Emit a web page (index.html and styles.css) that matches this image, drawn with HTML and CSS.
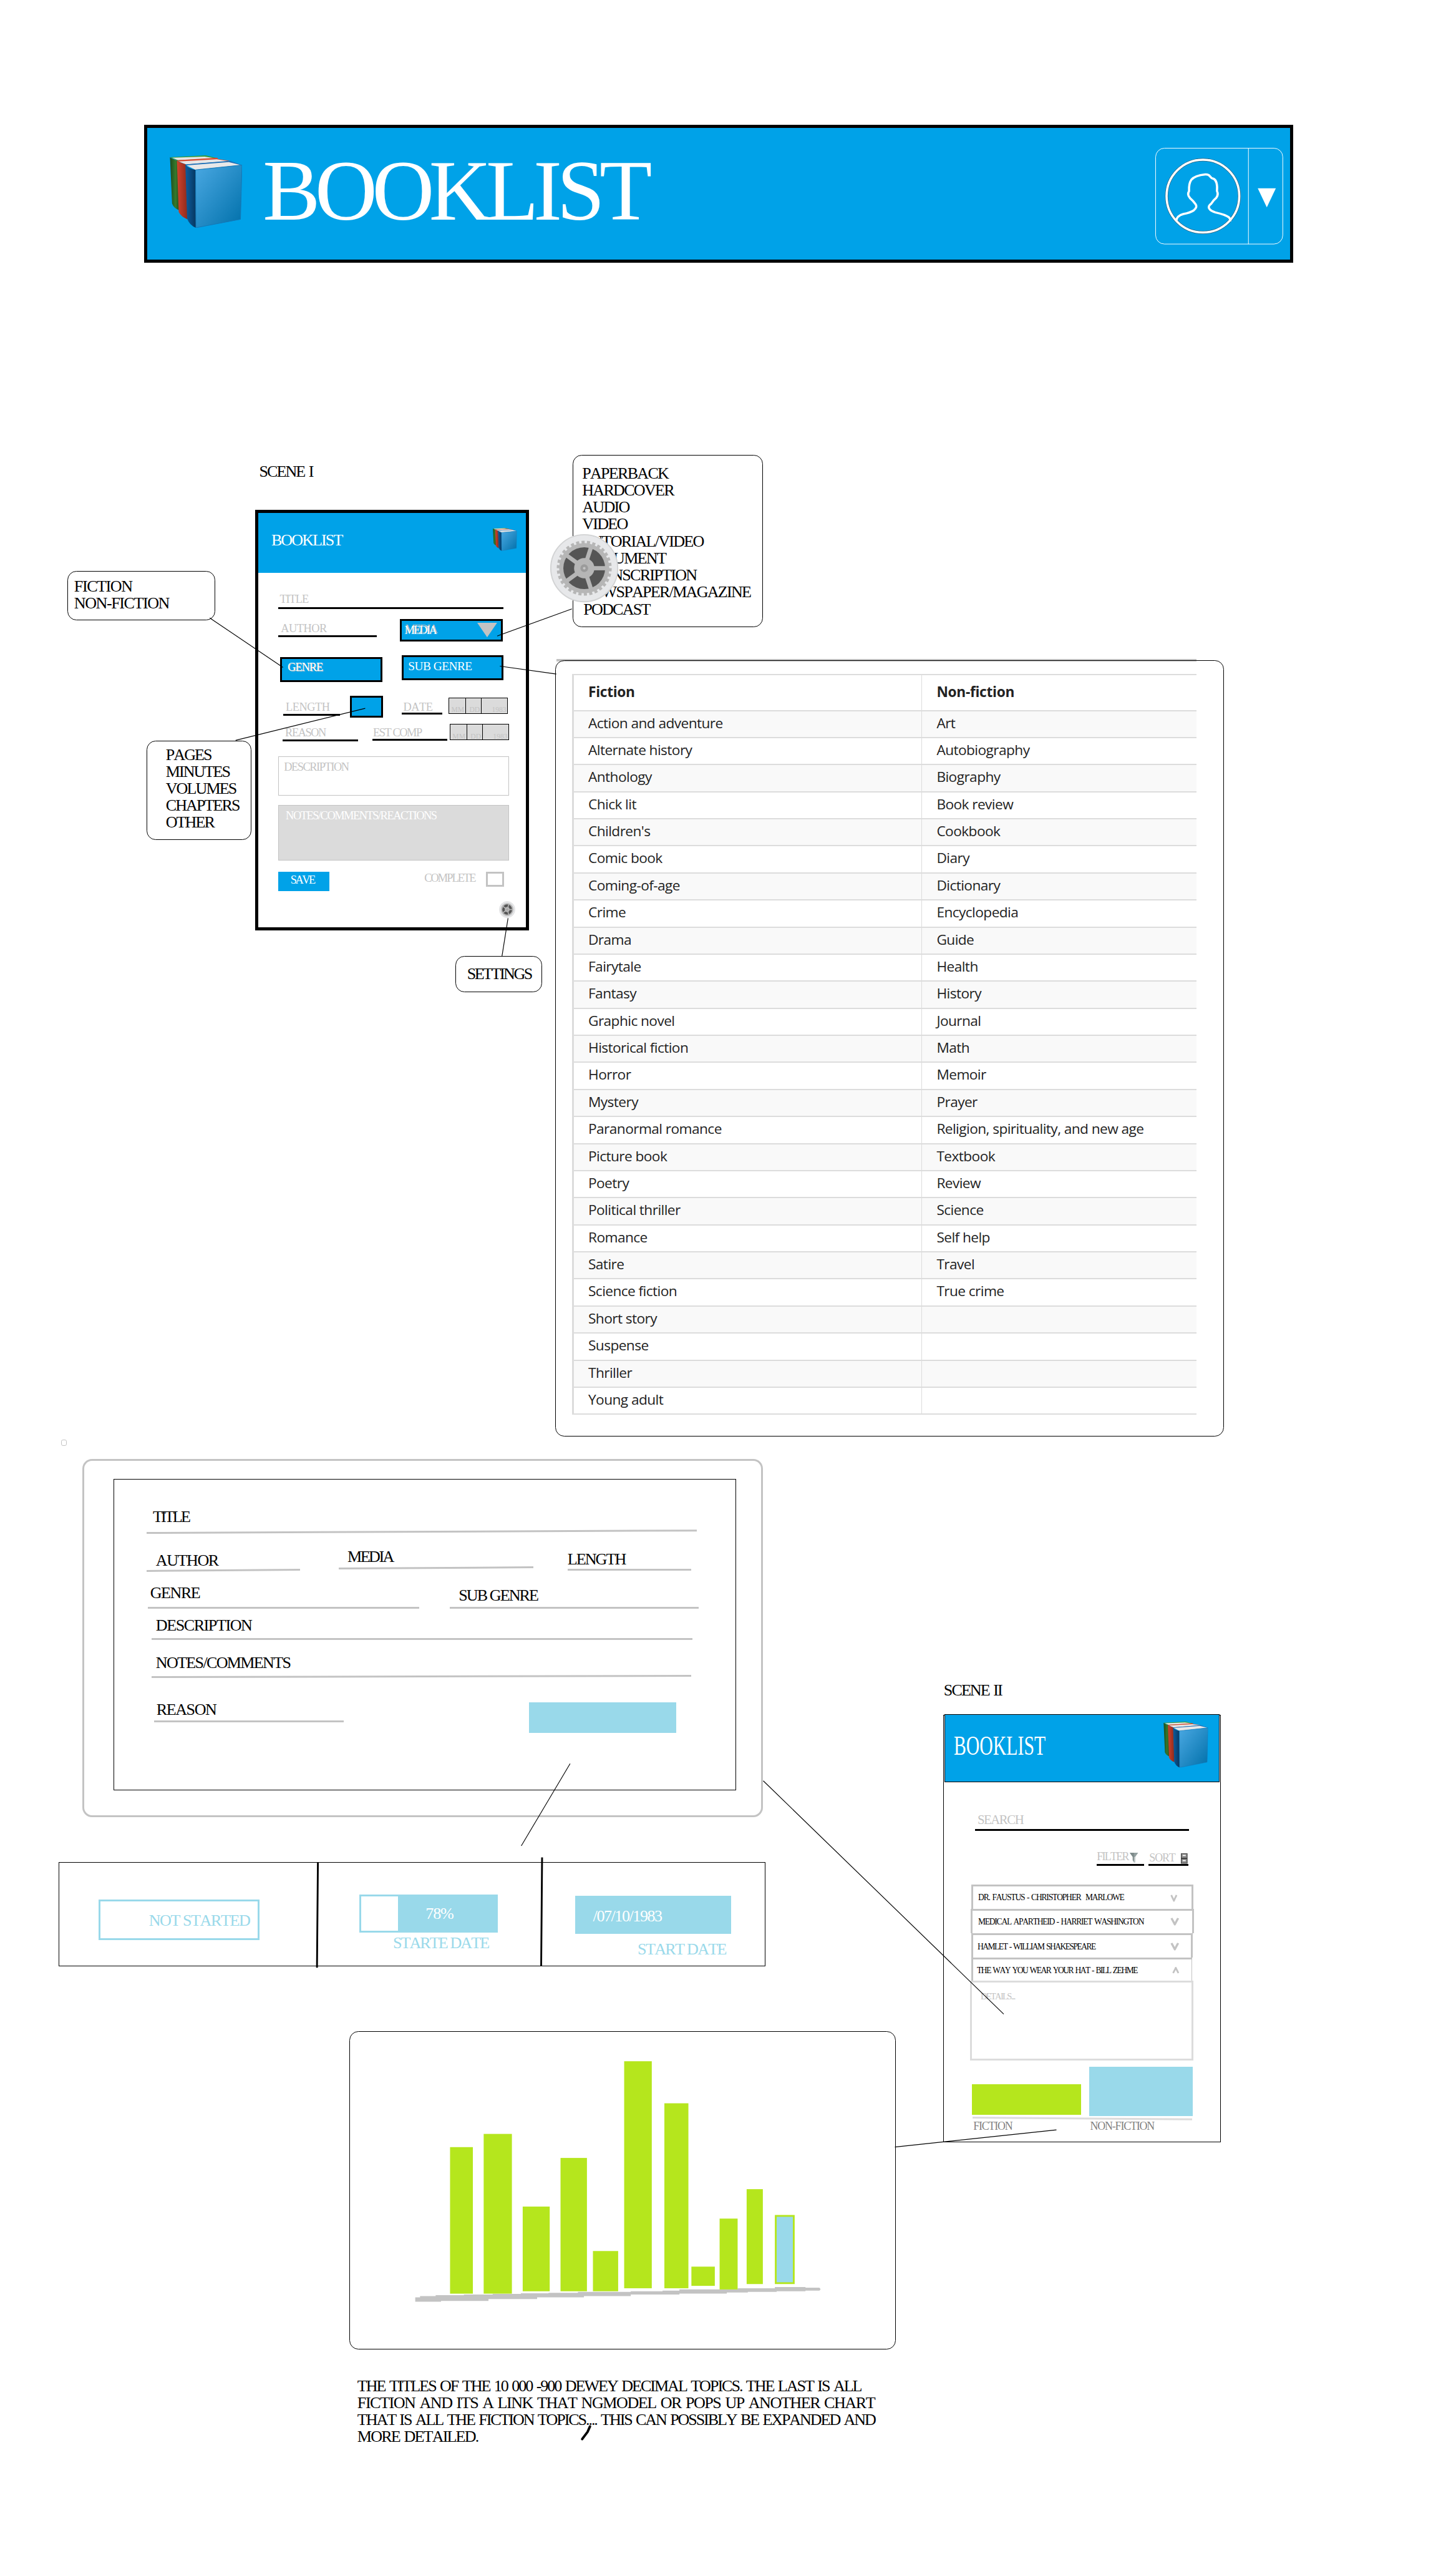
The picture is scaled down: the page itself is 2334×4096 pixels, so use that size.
FILE: index.html
```html
<!DOCTYPE html>
<html lang="en">
<head>
<meta charset="utf-8">
<title>Booklist wireframe</title>
<link rel="stylesheet" href="styles.css">
</head>
<body>
<svg class="defs" width="0" height="0" aria-hidden="true">
  <defs>
    <linearGradient id="cover" x1="0" y1="0" x2="1" y2="1"><stop offset="0" stop-color="#4aa8e2"/><stop offset="1" stop-color="#0070aa"/></linearGradient>
    <linearGradient id="spineBlue" x1="0" y1="0" x2="1" y2="0"><stop offset="0" stop-color="#0d5c9c"/><stop offset=".5" stop-color="#0a4a80"/><stop offset="1" stop-color="#06375f"/></linearGradient>
    <linearGradient id="spineRed" x1="0" y1="0" x2="1" y2="0"><stop offset="0" stop-color="#d2432c"/><stop offset="1" stop-color="#8e2a1c"/></linearGradient>
    <linearGradient id="spineGreen" x1="0" y1="0" x2="1" y2="0"><stop offset="0" stop-color="#1c4a1c"/><stop offset=".6" stop-color="#357a2c"/><stop offset="1" stop-color="#1f4c1c"/></linearGradient>
    <symbol id="books" viewBox="0 0 120 120" preserveAspectRatio="none">
      <path d="M1 3L60 0L80 5L14 9Z" fill="#3a9a34"/>
      <path d="M4 4L58 2L76 5L14 8Z" fill="#e6e6e6"/>
      <path d="M.5 3Q6 7 14 9L16 91Q7 88 4 80Z" fill="url(#spineGreen)"/>
      <path d="M12 8L79 4L80 6L100 9L27 15Z" fill="#d9482f"/>
      <path d="M15 10L78 6.500L98 9.500L27 15Z" fill="#e6e6e6"/>
      <path d="M12 8.500Q20 13 27 15L29.500 106Q19 102 15 94Z" fill="url(#spineRed)"/>
      <path d="M26 15L100 9L120 16L43 24Z" fill="#1c6fb8"/>
      <path d="M28 16.500L98 11L118 16L43 24Z" fill="#e8e8e8"/>
      <path d="M26 15Q31 22 43 24L43.500 120Q33 116 29 105Z" fill="url(#spineBlue)"/>
      <path d="M43 24L120 16L117.500 106L43.500 120Z" fill="url(#cover)" stroke="#1577b5" stroke-width="1"/>
    </symbol>
    <symbol id="gear" viewBox="-58 -58 116 116" preserveAspectRatio="none">
      <circle r="56" fill="#e7e8ea" stroke="#d2d3d4" stroke-width="2"/>
      <circle r="43.500" fill="none" stroke="#b6b6b6" stroke-width="5" pathLength="60" stroke-dasharray="1.150 .850"/>
      <circle r="42" fill="#b6b6b6"/>
      <circle r="35" fill="#555"/>
      <g fill="#b6b6b6">
        <rect y="-3.500" width="38" height="7"/>
        <rect y="-3.500" width="38" height="7" transform="rotate(72)"/>
        <rect y="-3.500" width="38" height="7" transform="rotate(144)"/>
        <rect y="-3.500" width="38" height="7" transform="rotate(216)"/>
        <rect y="-3.500" width="38" height="7" transform="rotate(288)"/>
        <circle r="17"/>
      </g>
      <circle r="6.500" fill="#9b9b9b"/>
      <circle r="2.200" fill="#c4c4c4"/>
    </symbol>
    <symbol id="chevron" viewBox="0 0 15 14" preserveAspectRatio="none">
      <path d="M2 1L7.500 12L13 1" fill="none" stroke="#c3c3c3" stroke-width="3.600"/>
    </symbol>
  </defs>
</svg>

<main class="board">
  <header class="site-bar">
    <svg class="site-logo"><use href="#books"/></svg>
    <h1 class="site-name">BOOKLIST</h1>
    <div class="account">
      <svg viewBox="171 165 636 480">
        <rect x="172.500" y="166.500" width="633" height="477" rx="44" fill="none" stroke="#fff" stroke-width="3"/>
        <path d="M634.500 166V644" stroke="#fff" stroke-width="3"/>
        <circle cx="408" cy="405" r="181" fill="none" stroke="#2c5f7a" stroke-width="15"/>
        <g fill="none" stroke="#fff" stroke-width="11" stroke-linejoin="round">
          <circle cx="408" cy="405" r="181"/>
          <path d="M275 530Q276 503 310 494Q345 487 362 476Q382 460 372 446Q360 428 344 415Q328 397 339 380Q337 342 350 324Q368 302 420 297Q436 296 443 306Q450 318 462 319Q482 330 478 380Q487 397 474 414Q460 425 450 442Q431 455 440 468Q448 480 470 486Q520 497 538 511Q545 518 544 530"/>
        </g>
        <path d="M681 366H771L726 461Z" fill="#fff"/>
      </svg>
    </div>
  </header>

  <h2 class="scene scene-one">SCENE I</h2>

  <section class="phone phone-one">
    <div class="app-bar">
      <span class="text tr-20">BOOKLIST</span>
      <svg class="app-logo"><use href="#books"/></svg>
    </div>
    <div class="form">
      <div class="field f-title small tr-10">TITLE</div>
      <div class="row r-author">
        <div class="field f-author small tr-5">AUTHOR</div>
        <div class="select s-media small tr-20"><span class="media-name">MEDIA</span><svg class="drop" viewBox="0 0 33 24"><path d="M0 0H33L16.500 24Z" fill="#c3c3c3"/></svg></div>
      </div>
      <div class="row r-genre">
        <div class="select s-genre small tr-10">GENRE</div>
        <div class="select s-sub small tr-5">SUB GENRE</div>
      </div>
      <div class="row r-length">
        <div class="field f-length small tr-5">LENGTH</div>
        <div class="select s-unit"></div>
        <div class="field f-date small tr-5">DATE</div>
        <div class="date d-one"><span>MM</span><span>DD</span><span>1983</span></div>
      </div>
      <div class="row r-reason">
        <div class="field f-reason small tr-15">REASON</div>
        <div class="field f-est small tr-15">EST COMP</div>
        <div class="date d-two"><span>MM</span><span>DD</span><span>1983</span></div>
      </div>
      <div class="area a-desc small tr-15">DESCRIPTION</div>
      <div class="area a-notes small tr-15">NOTES/COMMENTS/REACTIONS</div>
      <div class="row r-save">
        <div class="save small tr-25">SAVE</div>
        <div class="complete small tr-20">COMPLETE</div>
        <div class="check"></div>
      </div>
      <svg class="gear-small"><use href="#gear"/></svg>
    </div>
  </section>

  <div class="note n-genre"><p>FICTION</p><p>NON-FICTION</p></div>
  <div class="note n-unit tr-20"><p>PAGES</p><p>MINUTES</p><p>VOLUMES</p><p>CHAPTERS</p><p>OTHER</p></div>
  <div class="note n-settings tr-25"><p>SETTINGS</p></div>
  <div class="note n-media"><p>PAPERBACK</p><p>HARDCOVER</p><p>AUDIO</p><p>VIDEO</p><p>TUTORIAL/VIDEO</p><p>DOCUMENT</p><p>TRANSCRIPTION</p><p>NEWSPAPER/MAGAZINE</p><p class="podcast">PODCAST</p></div>
  <svg class="gear-large"><use href="#gear"/></svg>

  <div class="shade"></div>
  <section class="note genres">
    <div class="genre-table">
      <b>Fiction</b><b>Non-fiction</b>
      <span class="alt">Action and adventure</span><span class="alt">Art</span>
      <span>Alternate history</span><span>Autobiography</span>
      <span class="alt">Anthology</span><span class="alt">Biography</span>
      <span>Chick lit</span><span>Book review</span>
      <span class="alt">Children's</span><span class="alt">Cookbook</span>
      <span>Comic book</span><span>Diary</span>
      <span class="alt">Coming-of-age</span><span class="alt">Dictionary</span>
      <span>Crime</span><span>Encyclopedia</span>
      <span class="alt">Drama</span><span class="alt">Guide</span>
      <span>Fairytale</span><span>Health</span>
      <span class="alt">Fantasy</span><span class="alt">History</span>
      <span>Graphic novel</span><span>Journal</span>
      <span class="alt">Historical fiction</span><span class="alt">Math</span>
      <span>Horror</span><span>Memoir</span>
      <span class="alt">Mystery</span><span class="alt">Prayer</span>
      <span>Paranormal romance</span><span>Religion, spirituality, and new age</span>
      <span class="alt">Picture book</span><span class="alt">Textbook</span>
      <span>Poetry</span><span>Review</span>
      <span class="alt">Political thriller</span><span class="alt">Science</span>
      <span>Romance</span><span>Self help</span>
      <span class="alt">Satire</span><span class="alt">Travel</span>
      <span>Science fiction</span><span>True crime</span>
      <span class="alt">Short story</span><span class="alt"></span>
      <span>Suspense</span><span></span>
      <span class="alt">Thriller</span><span class="alt"></span>
      <span>Young adult</span><span></span>
    </div>
  </section>

  <div class="speck"></div>

  <section class="detail">
    <div class="sheet">
      <div class="line l-title tr-30">TITLE</div>
      <div class="row r-who">
        <div class="line l-author tr-15">AUTHOR</div>
        <div class="line l-media tr-25">MEDIA</div>
        <div class="line l-length tr-20">LENGTH</div>
      </div>
      <div class="row r-kind">
        <div class="line l-genre tr-15">GENRE</div>
        <div class="line l-sub tr-20">SUB GENRE</div>
      </div>
      <div class="line l-desc tr-15">DESCRIPTION</div>
      <div class="line l-notes tr-17">NOTES/COMMENTS</div>
      <div class="row r-why">
        <div class="line l-reason tr-15">REASON</div>
        <div class="status-chip"></div>
      </div>
    </div>
  </section>

  <section class="states">
    <div class="state st-none"><div class="bar b-none text tr-15">NOT STARTED</div></div>
    <div class="state st-part"><div class="bar b-part text tr-10">78%</div><p class="text tr-20">STARTE DATE</p></div>
    <div class="state st-done"><div class="bar b-done text tr-15">/07/10/1983</div><p class="text tr-17">START DATE</p></div>
  </section>

  <h2 class="scene scene-two tr-20">SCENE II</h2>

  <section class="phone-two">
    <div class="list-bar">
      <span class="list-name">BOOKLIST</span>
      <svg class="list-logo"><use href="#books"/></svg>
    </div>
    <div class="search tr-15">SEARCH</div>
    <div class="tools">
      <div class="tool t-filter"><span class="tr-17">FILTER</span><svg class="funnel" viewBox="0 0 14 16"><path d="M0 0H14L9 7V16H7L5 13V7Z" fill="#93a0a0"/><path d="M0 0H7V14L5 12V7Z" fill="#7d8a8a"/><path d="M7 7H9V16H7Z" fill="#c5cccc"/></svg></div>
      <div class="tool t-sort"><span class="tr-10">SORT</span><svg class="cabinet" viewBox="0 0 11 17"><rect width="11" height="17" fill="#3a3a3a"/><rect x="1" y="1" width="9" height="6.500" fill="#8a8a8a"/><rect x="1" y="9.500" width="9" height="6.500" fill="#8a8a8a"/><path d="M3 3.500H8M3 12H8" stroke="#fff" stroke-width="2"/></svg></div>
    </div>
    <div class="book bk-1"><span>DR. FAUSTUS - CHRISTOPHER&nbsp; MARLOWE</span><svg><use href="#chevron"/></svg></div>
    <div class="book bk-2"><span>MEDICAL APARTHEID - HARRIET WASHINGTON</span><svg><use href="#chevron"/></svg></div>
    <div class="book bk-3"><span>HAMLET - WILLIAM SHAKESPEARE</span><svg><use href="#chevron"/></svg></div>
    <div class="book bk-4"><span>THE WAY YOU WEAR YOUR HAT - BILL ZEHME</span><svg><use href="#chevron"/></svg></div>
    <div class="details">DETAILS...</div>
    <div class="totals"><div class="total-fiction"></div><div class="total-non"></div></div>
    <div class="totals-rule"></div>
    <div class="totals-names"><span>FICTION</span><span>NON-FICTION</span></div>
  </section>

  <section class="note chart">
    <svg viewBox="580 3369 906 528" width="904" height="526">
      <path d="M688 3811H696V3809H722V3807.500H769V3806.500H817V3805.500H864V3804.500H910V3803.500H959V3802H1047V3801H1100V3800H1128V3798H1225V3796H1287V3794H1338V3795H1361Q1365 3797.500 1361 3800H1338V3801H1290V3802H1242V3803H1207V3805H1128V3806.500H1047V3809H969V3811H891V3814H810V3817H731V3818.500H688Z" fill="#c3c3c3"/>
      <g fill="#b5e61d">
        <rect x="746" y="3561" width="38" height="244"/>
        <rect x="802" y="3539" width="47" height="266"/>
        <rect x="867" y="3660" width="45" height="141"/>
        <rect x="930" y="3579" width="44" height="222"/>
        <rect x="984" y="3734" width="42" height="67"/>
        <rect x="1036" y="3418" width="46" height="378"/>
        <rect x="1103" y="3488" width="40" height="308"/>
        <rect x="1148" y="3760" width="39" height="32"/>
        <rect x="1195" y="3680" width="30" height="118"/>
        <rect x="1240" y="3631" width="27" height="158"/>
        <rect x="1287" y="3674" width="33" height="115"/>
      </g>
      <rect x="1290" y="3677" width="27" height="109" fill="#99d9ea"/>
    </svg>
  </section>

  <div class="caption">
    <p class="cap-1">THE TITLES OF THE 10 000 -900 DEWEY DECIMAL TOPICS. THE LAST IS ALL</p>
    <p class="cap-2">FICTION AND ITS A LINK THAT NGMODEL OR POPS UP ANOTHER CHART</p>
    <p class="cap-3">THAT IS ALL THE FICTION TOPICS.... THIS CAN POSSIBLY BE EXPANDED AND</p>
    <p class="cap-4">MORE DETAILED.</p>
  </div>

  <svg class="connectors" viewBox="0 0 2416 4240">
    <g fill="none" stroke="#000" stroke-width="1.200">
      <path d="M348 1025L469.500 1107"/>
      <path d="M391 1228L606 1175"/>
      <path d="M843 1523L833 1586"/>
      <path d="M825 1055L949 1010"/>
      <path d="M829.500 1105L923 1118"/>
      <path d="M946 2925.500L865 3062"/>
      <path d="M1266.500 2954L1665.500 3341"/>
      <path d="M1485 3561.500L1753 3533"/>
    </g>
    <path d="M527.500 3089L526 3264M899.500 3081L898 3261" stroke="#000" stroke-width="3"/>
    <path d="M979 4025L975 4034L966 4046" fill="none" stroke="#000" stroke-width="4" stroke-linecap="round"/>
  </svg>
</main>
</body>
</html>
```

FILE: styles.css
```css
* { box-sizing: border-box; }
html, body { margin: 0; background: #fff; overflow: hidden; }
h1, h2, p { margin: 0; font-weight: 400; }
svg { display: block; flex: none; overflow: visible; }
.defs { position: absolute; }

/* The drawing board: frames are pinned on it, their contents flow. */
.board {
  position: relative;
  width: 2416px;
  height: 4240px;
  zoom: 0.96606;
  overflow: hidden;
  background: #fff;
  color: #000;
  font: 27px/28px "Liberation Serif", "Times New Roman", serif;
  font-kerning: none;
  white-space: nowrap;
}
.board > * { position: absolute; }

.tr-5 { letter-spacing: -0.5px; }
.tr-10 { letter-spacing: -1.1px; }
.tr-15 { letter-spacing: -1.5px; }
.tr-17 { letter-spacing: -1.75px; }
.tr-20 { letter-spacing: -2px; }
.tr-25 { letter-spacing: -2.6px; }
.tr-30 { letter-spacing: -3px; }
.small { font-size: 19px; line-height: 20px; }
.row { display: flex; align-items: flex-start; }
.row > * { flex: none; }

/* Site header */
.site-bar { left: 239px; top: 207px; width: 1907px; height: 229px; border: 5.2px solid #000; background: #00a2e8; display: flex; align-items: flex-start; }
.site-logo { width: 120px; height: 120px; margin: 46px 0 0 37px; }
.site-name { color: #fff; font-size: 143px; line-height: 144px; letter-spacing: -8.7px; margin: 32px 0 0 35px; }
.account { margin: 33px 12px 0 auto; width: 212px; height: 160px; }
.account svg { width: 212px; height: 160px; }

.scene { font-size: 27px; line-height: 28px; }
.scene-one { left: 430px; top: 768px; letter-spacing: -2px; word-spacing: 2px; }
.scene-two { left: 1566px; top: 2790px; word-spacing: 2px; }

/* Entry form */
.phone-one { left: 423px; top: 846px; width: 455px; height: 697px; border: 5.2px solid #000; background: #fff; }
.app-bar { height: 99px; background: #00a2e8; color: #fff; display: flex; align-items: flex-start; justify-content: space-between; padding: 25px 15px 0 22px; }
.app-bar .text { margin-top: 5.5px; }
.app-logo { width: 40px; height: 38px; }
.form { padding-left: 33px; }
.field { border-bottom: 3.2px solid #000; color: #c3c3c3; }
.f-title { margin-top: 34px; width: 374px; height: 26px; padding-left: 3px; }
.r-author { margin-top: 17px; height: 37px; }
.f-author { margin: 5.5px 0 0 1px; width: 163px; height: 24.5px; padding-left: 4px; }
.select { border: 3.2px solid #000; background: #00a2e8; color: #fff; }
.s-media { margin-left: 38px; width: 171px; height: 37px; display: flex; justify-content: space-between; padding: 3px 6px 0 5px; }
.media-name { padding-top: 3px; text-shadow: 1px -2px 0 #c3c3c3; }
.drop { width: 33px; height: 24px; }
.r-genre { margin-top: 23px; height: 44px; }
.s-genre { margin: 3px 0 0 4px; width: 169px; height: 41px; padding: 4px 0 0 9px; text-shadow: 1px 1px 0 #c3c3c3; }
.s-sub { margin-left: 32px; width: 169px; height: 41px; padding: 5px 0 0 8px; font-size: 20px; }
.r-length { margin-top: 23px; height: 36px; }
.f-length { margin: 9px 0 0 9px; width: 94px; height: 24px; padding-left: 4px; }
.s-unit { margin-left: 17px; width: 54px; height: 36px; }
.f-date { margin: 9px 0 0 31px; width: 68px; height: 22px; padding-left: 3px; }
.date { width: 99px; height: 27px; border: 1px solid #000; background: #dbdbdb; color: #c3c3c3; display: grid; grid-template-columns: 27px 26px 1fr; font-size: 12px; line-height: 12px; }
.date span { padding: 14px 2px 0 0; text-align: right; }
.date span + span { border-left: 1px solid #000; }
.d-one { margin: 3px 0 0 10px; }
.r-reason { margin-top: 11px; height: 29px; }
.f-reason { margin: 5px 0 0 8px; width: 125px; height: 24px; padding-left: 4px; }
.f-est { margin: 4.5px 0 0 24px; width: 124px; height: 23.5px; padding-left: 1px; }
.d-two { margin-left: 4px; }
.area { border: 1px solid #c3c3c3; }
.a-desc { margin: 24px 0 0 1px; width: 383px; height: 66px; padding: 8px 0 0 8px; color: #c3c3c3; }
.a-notes { margin-top: 15px; width: 384px; height: 92px; padding: 7px 0 0 12px; color: #fff; background: #dbdbdb; }
.r-save { margin: 19px 0 0 1px; height: 32px; }
.save { width: 84px; height: 32px; background: #00a2e8; color: #fff; padding: 4px 0 0 20px; }
.complete { margin: 1px 0 0 158px; width: 84px; color: #c3c3c3; }
.check { margin-left: 18px; width: 30px; height: 25px; border: 3.2px solid #c3c3c3; }
.gear-small { margin: 17px 0 0 367px; width: 27px; height: 28px; }

/* Callouts */
.note { border: 1px solid #000; border-radius: 15px; background: #fff; }
.n-genre { left: 112px; top: 947px; width: 245px; height: 82px; padding: 10px 0 0 10px; letter-spacing: -1.5px; }
.n-unit { left: 243px; top: 1229px; width: 174px; height: 164px; padding: 8px 0 0 31px; }
.n-settings { left: 756px; top: 1586px; width: 144px; height: 60px; padding: 14px 0 0 18px; }
.n-media { left: 950px; top: 755px; width: 316px; height: 285px; padding: 15.5px 0 0 15px; letter-spacing: -1.8px; }
.podcast { padding: 1px 0 0 2px; }
.gear-large { left: 912px; top: 885px; width: 115px; height: 115px; }

/* Genre reference table */
.shade { left: 923px; top: 1093px; width: 1062px; height: 4px; background: #c3c3c3; }
.genres { left: 921px; top: 1095px; width: 1110px; height: 1288px; background: transparent; padding: 22px 0 0 27px; }
.genre-table { width: 1036px; border-left: 3.2px solid #dcdcdc; border-top: 2.2px solid #dcdcdc; display: grid; grid-template-columns: 577px 1fr; grid-template-rows: 59.5px repeat(26, 44.9px); font-family: "Open Sans", sans-serif; font-size: 23.5px; letter-spacing: -0.6px; color: #222; font-kerning: auto; }
.genre-table > * { border-bottom: 2.2px solid #dcdcdc; padding-left: 24px; line-height: 40px; }
.genre-table > b { line-height: 56px; letter-spacing: -0.3px; }
.genre-table > :nth-child(even) { border-left: 1px solid #dcdcdc; }
.genre-table > .alt { background: #f9f9f9; }

.speck { left: 101px; top: 2388px; width: 10px; height: 10px; border: 1px solid #c3c3c3; border-radius: 3px; }

/* Expanded entry */
.detail { left: 136.5px; top: 2420px; width: 1129.5px; height: 594px; border: 3.2px solid #c3c3c3; border-radius: 16px; padding: 30px 0 0 49px; }
.sheet { width: 1033px; height: 517px; border: 1px solid #000; padding-left: 54px; }
.line { position: relative; }
.line::after { content: ""; position: absolute; left: 0; right: 0; bottom: 0; height: 3px; background: #c3c3c3; transform-origin: 0 50%; }
.l-title { margin-top: 48px; width: 913px; height: 42px; padding-left: 10px; }
.l-title::after { transform: skewY(-0.25deg); }
.r-who { margin-top: 24px; height: 40px; }
.l-author { margin-top: 6px; width: 255px; height: 33px; padding-left: 15px; }
.l-author::after { transform: skewY(-0.45deg); }
.l-media { margin: 0 0 0 63px; width: 323px; height: 35px; padding-left: 15px; }
.l-media::after { transform: skewY(-0.35deg); }
.l-length { margin: 4px 0 0 57px; width: 205px; height: 33px; }
.r-kind { margin: 20px 0 0 1.5px; height: 40px; }
.l-genre { width: 450px; height: 40px; padding-left: 4px; }
.l-sub { margin: 4px 0 0 51px; width: 413px; height: 36px; padding-left: 15px; }
.l-desc { margin: 14px 0 0 8px; width: 897px; height: 38px; padding-left: 7px; }
.l-notes { margin: 24px 0 0 8px; width: 895px; height: 39px; padding-left: 7px; }
.l-notes::after { transform: skewY(-0.13deg); }
.r-why { margin: 38px 0 0 12px; }
.l-reason { margin-top: 1px; width: 315px; height: 35px; padding-left: 4px; }
.status-chip { margin: 3px 0 0 307px; width: 245px; height: 51px; background: #99d9ea; }

/* Progress states */
.states { left: 97px; top: 3089px; width: 1173px; height: 173px; border: 1px solid #000; display: flex; align-items: flex-start; color: #99d9ea; }
.st-none { width: 429px; padding: 61px 0 0 66px; }
.b-none { width: 267px; height: 67px; border: 3.2px solid #99d9ea; padding: 18px 0 0 80px; }
.st-part { width: 372px; padding: 53px 0 0 69px; }
.b-part { width: 230px; height: 63px; border: 3.2px solid #99d9ea; border-right: 0; background: linear-gradient(#99d9ea, #99d9ea) 61px 0 / 200px 100% no-repeat; color: #fff; padding: 14px 0 0 107px; }
.st-part p { margin: 3px 0 0 56px; }
.st-done { padding: 55px 0 0 55px; }
.b-done { width: 259px; height: 63px; background: #99d9ea; color: #fff; padding: 19px 0 0 30px; }
.st-done p { margin: 11px 0 0 104px; }

/* Reading list */
.phone-two { left: 1565px; top: 2845px; width: 461px; height: 709px; border: 1px solid #000; background: #fff; }
.list-bar { margin: -3px 1px 0; height: 113px; border: 1px solid #000; background: #00a2e8; color: #fff; display: flex; justify-content: space-between; align-items: flex-start; padding: 12px 18px 0 15px; }
.list-name { font-size: 46px; line-height: 46px; margin-top: 16px; transform: scaleX(0.67); transform-origin: 0 0; }
.list-logo { width: 74px; height: 76px; }
.search { margin: 51px 0 0 52px; width: 355px; height: 30px; border-bottom: 3.2px solid #000; padding-left: 4px; font-size: 21.5px; line-height: 22px; color: #c3c3c3; }
.tools { display: flex; gap: 8px; margin: 33.5px 0 0 254px; font-size: 18.5px; line-height: 20px; color: #c3c3c3; }
.tool { display: flex; height: 24.5px; border-bottom: 3.2px solid #000; }
.t-filter { width: 78px; }
.t-filter span { width: 55px; }
.t-sort { width: 66px; padding-left: 1px; }
.t-sort span { width: 53px; padding-top: 2px; }
.funnel { width: 14px; height: 16px; margin-top: 2.5px; }
.cabinet { width: 11px; height: 17px; margin-top: 3.5px; }
.book { display: flex; border: 3.2px solid #c3c3c3; border-bottom: 0; font-size: 14px; line-height: 14px; word-spacing: 1.5px; }
.book span { width: 319px; }
.book svg { width: 15px; height: 13px; }
.bk-1 { margin: 31px 0 0 46px; width: 368px; height: 40px; padding: 11px 0 0 8px; letter-spacing: -1.2px; }
.bk-1 svg { width: 12px; height: 12px; margin-top: 3px; }
.bk-2 { margin-left: 45px; width: 370px; height: 41px; padding: 12px 0 0 9px; letter-spacing: -1.28px; }
.bk-3 { margin-left: 46px; width: 367px; height: 40px; padding: 12px 0 0 7px; letter-spacing: -1.55px; }
.bk-3 span { width: 320px; }
.bk-4 { margin-left: 45.5px; width: 367px; height: 39px; border-right-width: 1px; padding: 11.5px 0 0 6.5px; letter-spacing: -1.54px; }
.bk-4 span { width: 324px; }
.bk-4 svg { width: 12px; height: 11px; margin-top: 1px; transform: rotate(180deg); }
.details { margin-left: 44px; width: 370px; height: 132px; border: 3.2px solid #dcdcdc; padding: 15px 0 0 14px; font-size: 15px; line-height: 16px; letter-spacing: -1.7px; color: #c3c3c3; }
.totals { margin: 10px 0 0 47px; display: flex; align-items: flex-start; }
.total-fiction { margin-top: 29px; width: 181px; height: 51px; background: #b5e61d; }
.total-non { margin-left: 13px; width: 172px; height: 82px; background: #99d9ea; }
.totals-rule { margin: 1px 0 0 48px; width: 364px; height: 3px; background: #dcdcdc; transform: skewY(0.45deg); transform-origin: 0 0; }
.totals-names { display: flex; margin: 3px 0 0 49px; font-size: 18.5px; line-height: 20px; letter-spacing: -1.2px; color: #7f7f7f; }
.totals-names span:first-child { width: 194px; }

.chart { left: 580px; top: 3369px; width: 906px; height: 528px; }
.caption { left: 593px; top: 3944px; word-spacing: 2px; }
.cap-1 { letter-spacing: -2.1px; }
.cap-2 { letter-spacing: -1.52px; }
.cap-3 { letter-spacing: -2.17px; }
.cap-4 { letter-spacing: -1.9px; }
.connectors { left: 0; top: 0; width: 2416px; height: 4240px; pointer-events: none; }
```
